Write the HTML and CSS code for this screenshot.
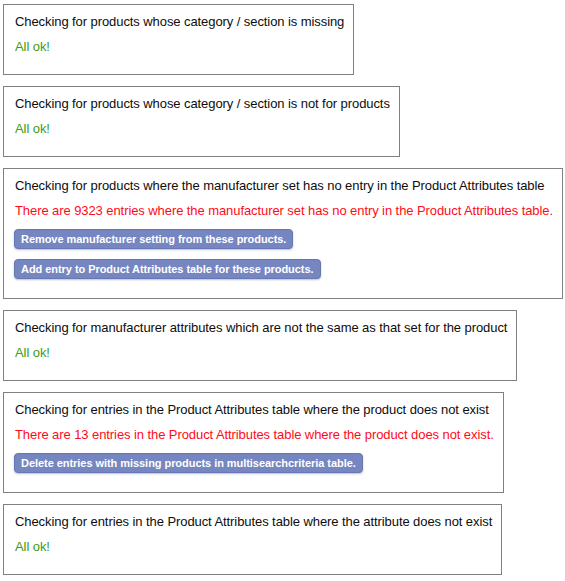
FILE: index.html
```html
<!DOCTYPE html>
<html>
<head>
<meta charset="utf-8">
<link rel="stylesheet" href="styles.css">
</head>
<body>
<div class="list">
  <div class="check">
    <div class="title">Checking for products whose category / section is missing</div>
    <div class="ok">All ok!</div>
  </div>
  <div class="check">
    <div class="title">Checking for products whose category / section is not for products</div>
    <div class="ok">All ok!</div>
  </div>
  <div class="check">
    <div class="title">Checking for products where the manufacturer set has no entry in the Product Attributes table</div>
    <div class="err">There are 9323 entries where the manufacturer set has no entry in the Product Attributes table.</div>
    <div class="actions">
      <button class="btn">Remove manufacturer setting from these products.</button>
      <button class="btn">Add entry to Product Attributes table for these products.</button>
    </div>
  </div>
  <div class="check">
    <div class="title">Checking for manufacturer attributes which are not the same as that set for the product</div>
    <div class="ok">All ok!</div>
  </div>
  <div class="check">
    <div class="title">Checking for entries in the Product Attributes table where the product does not exist</div>
    <div class="err">There are 13 entries in the Product Attributes table where the product does not exist.</div>
    <div class="actions">
      <button class="btn">Delete entries with missing products in multisearchcriteria table.</button>
    </div>
  </div>
  <div class="check">
    <div class="title">Checking for entries in the Product Attributes table where the attribute does not exist</div>
    <div class="ok">All ok!</div>
  </div>
</div>
</body>
</html>
```
FILE: styles.css
```css
html, body {
  margin: 0;
  padding: 0;
  background: #ffffff;
}
body {
  font-family: "Liberation Sans", Arial, sans-serif;
  font-size: 13px;
  letter-spacing: -0.08px;
  color: #111111;
}
.list {
  display: flex;
  flex-direction: column;
  align-items: flex-start;
  gap: 11px;
  padding: 4px 3px;
}
.check {
  border: 1px solid #808080;
  padding: 9px 9px 19px 11px;
  display: flex;
  flex-direction: column;
  gap: 9px;
  white-space: nowrap;
}
.title {
  line-height: 16px;
  color: #0d0d0d;
}
.ok {
  line-height: 16px;
  color: #3f9a14;
}
.err {
  line-height: 16px;
  color: #ff0a1a;
}
.actions {
  display: flex;
  flex-direction: column;
  align-items: flex-start;
  gap: 10px;
  margin-top: 1px;
  margin-left: -1px;
}
.btn {
  font-family: "Liberation Sans", Arial, sans-serif;
  font-size: 11px;
  font-weight: bold;
  letter-spacing: -0.05px;
  color: #ffffff;
  background: #7686c0;
  border: 1px solid #6677b3;
  border-radius: 4px;
  padding: 3px 6px;
  line-height: 12px;
  box-shadow: 0 1px 2px rgba(60, 70, 130, 0.35);
  cursor: pointer;
}
```
